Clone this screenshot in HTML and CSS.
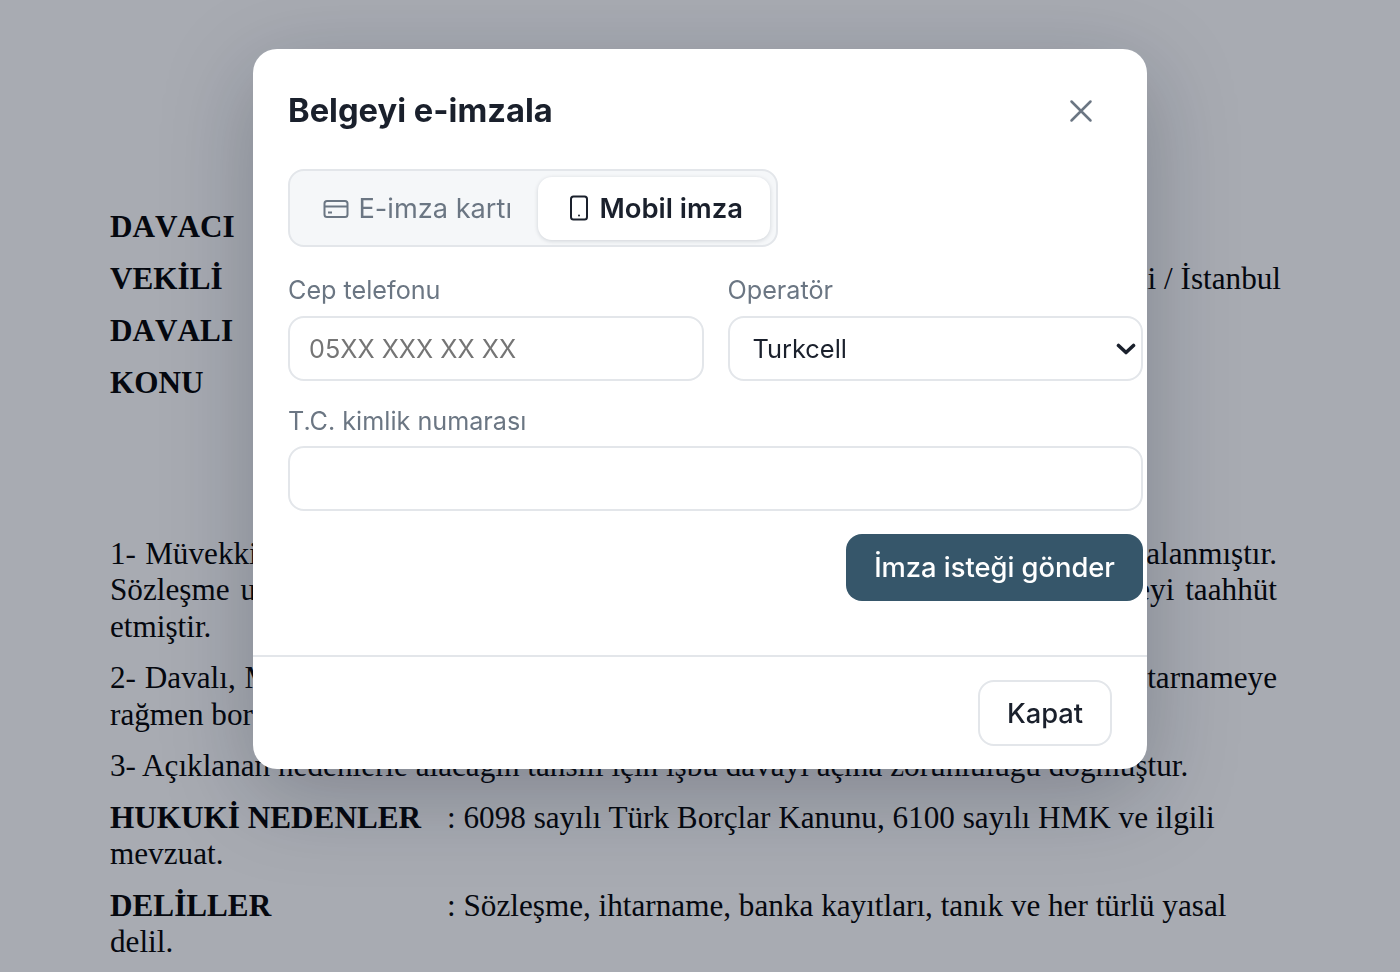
FILE: index.html
```html
<!DOCTYPE html>
<html lang="tr">
<head>
<meta charset="utf-8">
<title>Belgeyi e-imzala</title>
<link rel="stylesheet" href="styles.css">
</head>
<body>
<main class="doc">
  <div class="parties">
    <div class="party"><b>DAVACI</b><span>: Ayşe Yılmaz, Bağdat Caddesi No: 12 Kadıköy</span></div>
    <div class="party spread"><b>VEKİLİ</b><span>Av. Mehmet Demir, Halaskargazi Caddesi No: 45 Şişli / İstanbul</span></div>
    <div class="party"><b>DAVALI</b><span>: Murat Kaya</span></div>
    <div class="party"><b>KONU</b><span>: Alacak talebi</span></div>
  </div>
  <section class="facts">
    <p><span class="line">1- Müvekkil ile davalı arasında hizmet sözleşmesi ve protokol usulüne uygun imzalanmıştır.</span><span class="line">Sözleşme uyarınca davalı kendisine düşen edimleri eksiksiz yerine getirip ödemeyi taahhüt</span><span class="line end">etmiştir.</span></p>
    <p><span class="line">2- Davalı, Müvekkile olan borcunu ödememiş, noter aracılığıyla gönderilen son ihtarnameye</span><span class="line end">rağmen borcunu ödememiştir.</span></p>
    <p><span class="line end">3- Açıklanan nedenlerle alacağın tahsili için işbu davayı açma zorunluluğu doğmuştur.</span></p>
    <p><span class="line end"><b class="ref-label">HUKUKİ NEDENLER</b>: 6098 sayılı Türk Borçlar Kanunu, 6100 sayılı HMK ve ilgili</span><span class="line end">mevzuat.</span></p>
    <p><span class="line end"><b class="ref-label">DELİLLER</b>: Sözleşme, ihtarname, banka kayıtları, tanık ve her türlü yasal</span><span class="line end">delil.</span></p>
  </section>
</main>

<div class="overlay">
  <div class="modal" role="dialog" aria-label="Belgeyi e-imzala">
    <header class="modal-head">
      <h1>Belgeyi e-imzala</h1>
      <button class="close" aria-label="Kapat">
        <svg width="24" height="24" viewBox="0 0 24 24" fill="none" stroke="currentColor" stroke-width="2.5" stroke-linecap="round"><path d="M2.5 2.5l19 19M21.5 2.5l-19 19"/></svg>
      </button>
    </header>
    <div class="modal-body">
      <div class="tabs">
        <button class="tab">
          <svg width="26" height="20" viewBox="0 0 26 20" fill="none" stroke="currentColor" stroke-width="2"><rect x="1.5" y="2" width="23" height="16" rx="2.5"/><path d="M1.5 7.5h23M5 13.5h4"/></svg>
          E-imza kartı
        </button>
        <button class="tab active">
          <svg width="20" height="26" viewBox="0 0 20 26" fill="none" stroke="currentColor" stroke-width="2"><rect x="2" y="1.5" width="16" height="23" rx="2.5"/><circle cx="10" cy="20.5" r="1" fill="currentColor" stroke="none"/></svg>
          Mobil imza
        </button>
      </div>
      <form class="fields">
        <label class="field"><span>Cep telefonu</span><input type="text" placeholder="05XX XXX XX XX"></label>
        <label class="field"><span>Operatör</span>
          <span class="select-wrap">
            <select><option>Turkcell</option><option>Vodafone</option><option>Türk Telekom</option></select>
            <svg class="chev" width="20" height="12" viewBox="0 0 20 12" fill="none" stroke="currentColor" stroke-width="3.6" stroke-linecap="round" stroke-linejoin="round"><path d="M2.5 2.5L10 9.5l7.5-7"/></svg>
          </span>
        </label>
        <label class="field wide"><span>T.C. kimlik numarası</span><input type="text"></label>
        <div class="actions wide"><button type="button" class="primary">İmza isteği gönder</button></div>
      </form>
    </div>
    <footer class="modal-foot"><button class="secondary">Kapat</button></footer>
  </div>
</div>
</body>
</html>
```
FILE: styles.css
```css
* { box-sizing: border-box; }
html, body { margin: 0; height: 100%; }
body { background: #fff; overflow: hidden; }

.doc {
  padding: 209px 123px 0 110px;
  font-family: "Liberation Serif", serif;
  font-size: 31.2px;
  line-height: 36.4px;
  color: #000;
}
.doc b { font-kerning: none; }
.parties { display: flex; flex-direction: column; gap: 15.6px; }
.party { display: flex; gap: 60px; }
.party b { width: 140px; flex: none; }
.spread { justify-content: space-between; margin-right: -4px; }
.spread b { width: auto; }
.facts { margin-top: 134.6px; display: flex; flex-direction: column; gap: 15.2px; }
.facts p { margin: 0; }
.line { display: block; text-align: justify; text-align-last: justify; white-space: nowrap; }
.line.end { text-align-last: left; }
.ref-label { display: inline-block; width: 337px; }

.overlay {
  position: fixed;
  inset: 0;
  background: rgba(15, 23, 42, .36);
}
.modal {
  position: absolute;
  left: 253px;
  top: 49px;
  width: 894px;
  height: 720px;
  background: #fff;
  border-radius: 24px;
  box-shadow: 0 24px 90px rgba(15, 23, 42, .26);
  font-family: Inter, sans-serif;
  display: flex;
  flex-direction: column;
}
.modal-head {
  display: flex;
  justify-content: space-between;
  align-items: flex-start;
  padding: 41px 54px 0 35px;
  height: 120px;
  flex: none;
}
.modal-head h1 {
  margin: 0;
  font-size: 32.7px;
  line-height: 40px;
  font-weight: 700;
  color: #1a202c;
}
.close {
  border: 0; background: none; padding: 0;
  color: #6b7683;
  display: flex;
  margin-top: 9px;
}
.modal-body { padding: 0 4px 0 35px; flex: 1; }
.tabs {
  display: inline-flex;
  width: 490px;
  height: 78px;
  padding: 6px 6px 5px 8px;
  background: #f5f7f9;
  border: 2px solid #e3e6ea;
  border-radius: 16px;
}
.tab {
  border: 0;
  background: none;
  font-family: inherit;
  font-size: 27.2px;
  color: #6b7683;
  display: flex;
  align-items: center;
  justify-content: center;
  gap: 9px;
  height: 63px;
  border-radius: 14px;
  padding: 0;
}
.tab:first-child { width: 240px; }
.tab.active {
  width: 232px;
  margin-left: 1px;
  padding: 0 0 2px 3px;
  font-size: 27.4px;
  font-weight: 600;
  color: #1a202c;
  background: #fff;
  gap: 11px;
  box-shadow: 0 1px 4px rgba(15, 23, 42, .16);
}
.fields {
  margin-top: 25px;
  display: grid;
  grid-template-columns: 415.5px 415.5px;
  column-gap: 24px;
  row-gap: 22px;
}
.field { display: flex; flex-direction: column; gap: 7.5px; }
.field > span:first-child { font-size: 25.2px; line-height: 36px; color: #6b7683; }
.wide { grid-column: 1 / -1; }
input, select {
  width: 100%;
  height: 65px;
  border: 2px solid #e3e6ea;
  border-radius: 16px;
  background: #fff;
  font-family: Inter, sans-serif;
  font-size: 25.4px;
  color: #1a202c;
  padding: 0 19px;
  outline: none;
}
input::placeholder { color: #757575; opacity: 1; font-size: 25.2px; }
select { appearance: none; padding-left: 23px; }
.select-wrap { position: relative; display: block; }
.chev { position: absolute; right: 7px; top: 27px; color: #1a202c; pointer-events: none; }
.actions { display: flex; justify-content: flex-end; margin-top: .5px; }
.primary, .secondary {
  font-family: Inter, sans-serif;
  font-size: 27.3px;
  font-weight: 500;
  border-radius: 16px;
}
.primary {
  width: 297px;
  height: 67px;
  border: 0;
  background: #36566a;
  color: #fff;
  padding: 0;
}
.modal-foot {
  height: 114px;
  flex: none;
  border-top: 2px solid #e3e6ea;
  display: flex;
  justify-content: flex-end;
  padding: 23px 35px 0 0;
}
.secondary {
  width: 134px;
  height: 66px;
  background: #fff;
  border: 2px solid #e3e6ea;
  color: #1a202c;
  padding: 0;
}
```
